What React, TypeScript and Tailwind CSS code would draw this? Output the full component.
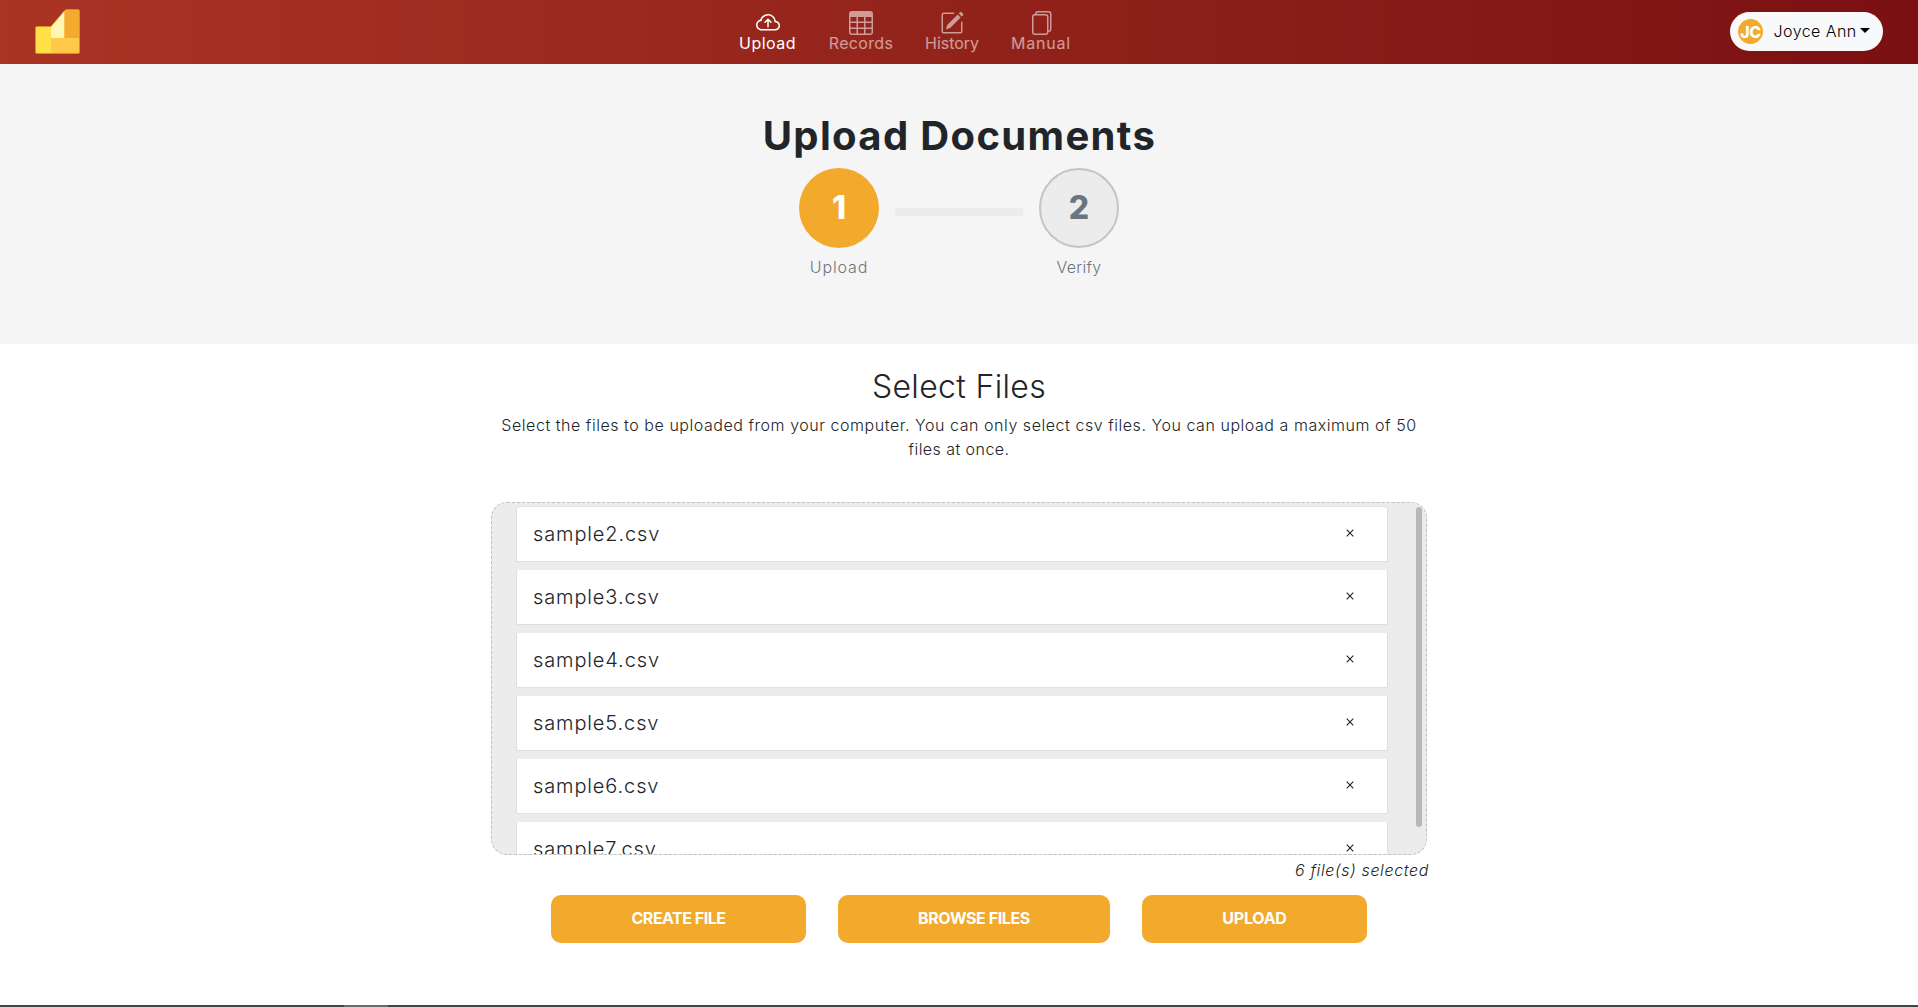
import { BsCloudArrowUp, BsFiles, BsPencilSquare, BsTable } from 'react-icons/bs';

const navItems = [
  { label: 'Upload', Icon: BsCloudArrowUp, box: 'w-[59px] text-white', text: 'tracking-[0.45px]' },
  { label: 'Records', Icon: BsTable, box: 'w-[64px] text-white/55', text: 'tracking-[0.35px]' },
  { label: 'History', Icon: BsPencilSquare, box: 'w-[54px] text-white/55', text: 'tracking-[-0.05px]' },
  { label: 'Manual', Icon: BsFiles, box: 'w-[60px] text-white/55', text: 'tracking-[0.76px]' },
];

const files = ['sample2.csv', 'sample3.csv', 'sample4.csv', 'sample5.csv', 'sample6.csv', 'sample7.csv'];

function Logo() {
  return (
    <svg className="h-[45px] w-[45px]" viewBox="0 0 45 45">
      <path d="M2 17.5H16V44.5H2Q.5 44.5.5 43V19Q.5 17.5 2 17.5Z" fill="#ffe048" />
      <path d="M16 17.5 29.5 1.5V29H16Z" fill="#fff7b3" />
      <path d="M29.5 2Q30 .5 31.5 .5H43Q44.5 .5 44.5 2V29H29.5Z" fill="#f4aa2c" />
      <path d="M16 29H44.5V43Q44.5 44.5 43 44.5H16Z" fill="#ffc847" />
      <path
        d="M2 17.5H16L29.5 1.7Q30.5.5 31.5.5H43Q44.5.5 44.5 2V43Q44.5 44.5 43 44.5H2Q.5 44.5.5 43V19Q.5 17.5 2 17.5Z"
        fill="none"
        stroke="#e58f25"
        strokeWidth="0.8"
      />
      <path d="M29.5 2V29" stroke="#f7c052" strokeWidth="1" />
    </svg>
  );
}

function Header() {
  return (
    <header className="flex h-16 bg-linear-to-r from-[#aa3424] to-[#7a1012] pl-[35px] pr-[35px]">
      <div className="mt-[9px]">
        <Logo />
      </div>
      <nav className="ml-[658px] flex gap-8">
        {navItems.map(({ label, Icon, box, text }) => (
          <a key={label} className={`flex flex-col items-center pt-[11px] ${box}`}>
            <Icon size={24} />
            <span className={`-mt-1 whitespace-nowrap leading-6 ${text}`}>{label}</span>
          </a>
        ))}
      </nav>
      <button className="ml-auto mt-3 flex h-[39px] w-[153px] items-center rounded-full bg-[#f8f9fa] pl-2 text-black">
        <span className="flex h-[25px] w-[25px] items-center justify-center rounded-full bg-[#f3a92c] text-base font-extrabold tracking-[-0.4px] text-white">
          JC
        </span>
        <span className="-mt-px ml-[10.5px] w-[85.5px] whitespace-nowrap text-left font-[350] tracking-[0.45px]">
          Joyce Ann
        </span>
        <span className="-mt-[3px] ml-px h-0 w-0 border-x-[5px] border-t-[5px] border-x-transparent border-t-black" />
      </button>
    </header>
  );
}

function Steps() {
  return (
    <section className="flex h-[280px] flex-col items-center bg-[#f5f5f5] pt-12">
      <h1 className="mb-2 ml-px text-[40px] font-bold leading-[48px] tracking-[1.35px] text-[#212529]">
        Upload Documents
      </h1>
      <div className="flex gap-4 text-[#6c757d]">
        <div className="flex w-20 flex-col items-center">
          <div className="flex h-20 w-20 items-center justify-center rounded-full bg-[#f3a92c] text-[32px] font-extrabold text-white">
            1
          </div>
          <span className="mt-[7px] font-[350] leading-6 tracking-[0.85px]">Upload</span>
        </div>
        <div className="mt-10 h-2 w-32 bg-[#ececec]" />
        <div className="flex w-20 flex-col items-center">
          <div className="flex h-20 w-20 items-center justify-center rounded-full border-2 border-[#c4c4c4] bg-[#ececec] text-[32px] font-extrabold">
            2
          </div>
          <span className="mt-[7px] font-[350] leading-6 tracking-[0.25px]">Verify</span>
        </div>
      </div>
    </section>
  );
}

function FileList() {
  return (
    <div className="flex h-[353px] justify-between overflow-hidden rounded-2xl border border-dashed border-[#c0c0c0] bg-[#ececec] pl-6 pr-1 pt-[3px]">
      <ul className="flex w-[872px] flex-col gap-2">
        {files.map((name) => (
          <li
            key={name}
            className="flex h-[55px] shrink-0 items-center justify-between border border-t-0 border-[#dfdfdf] bg-white pl-4 pr-[33px] text-xl font-[350] tracking-[0.88px] text-[#212529] first:h-14 first:rounded-t first:border-t"
          >
            <span>{name}</span>
            <svg className="mb-0.5 h-[8px] w-[8px]" viewBox="0 0 8 8" stroke="#212529" strokeWidth="1.1">
              <path d="M.7.7 7.3 7.3M7.3.7.7 7.3" />
            </svg>
          </li>
        ))}
      </ul>
      <div className="mt-px h-[320px] w-1.5 rounded-full bg-[#b8b8b8]" />
    </div>
  );
}

export default function App() {
  const button = 'h-12 rounded-[10px] bg-[#f3a92c] pb-[3px] text-base font-bold text-white';
  return (
    <div className="flex h-[1007px] flex-col overflow-hidden bg-white font-['Inter',sans-serif] text-base text-[#212529]">
      <Header />
      <Steps />
      <main className="mx-auto w-[936px] pt-6">
        <h2 className="text-center text-[32px] font-light leading-[38px] tracking-[0.35px]">Select Files</h2>
        <p className="mt-[7px] text-center font-[350] leading-6">
          <span className="whitespace-nowrap tracking-[0.54px]">
            Select the files to be uploaded from your computer. You can only select csv files. You can upload a maximum
            of 50
          </span>
          <br />
          <span className="tracking-[0.45px]">files at once.</span>
        </p>
        <div className="mt-[41px]">
          <FileList />
        </div>
        <p className="-mr-0.5 mt-[3px] text-right font-[350] italic leading-6 tracking-[0.63px]">6 file(s) selected</p>
        <div className="ml-15 mt-[13px] flex gap-8">
          <button className={`w-[255px] tracking-[-0.5px] ${button}`}>CREATE FILE</button>
          <button className={`w-[272px] tracking-[-0.4px] ${button}`}>BROWSE FILES</button>
          <button className={`w-[225px] tracking-[-0.25px] ${button}`}>UPLOAD</button>
        </div>
      </main>
      <footer className="mt-auto h-0.5 shrink-0 bg-[#444643] pl-[344px]">
        <div className="h-full w-11 bg-[#6b6b6b]" />
      </footer>
    </div>
  );
}
